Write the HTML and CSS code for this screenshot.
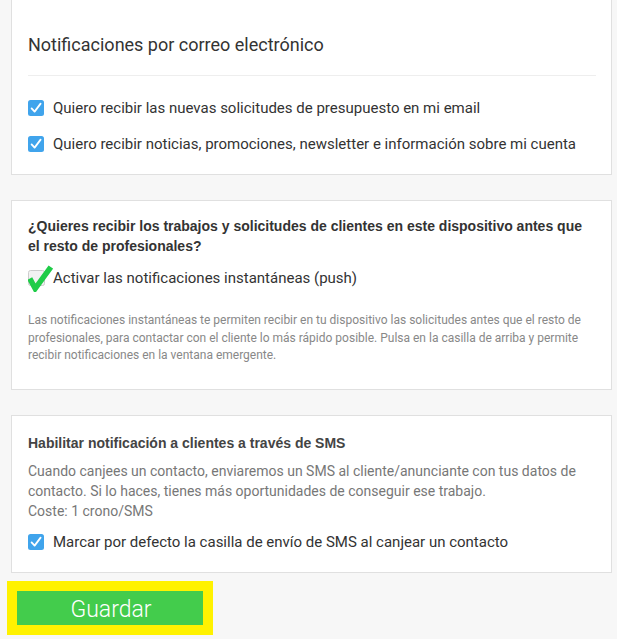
FILE: index.html
```html
<!DOCTYPE html>
<html lang="es">
<head>
    <meta charset="UTF-8">
    <meta name="viewport" content="width=device-width, initial-scale=1.0">
    <title>Notificaciones</title>
    <link rel="stylesheet" href="styles.css">
</head>
<body>
    <div class="page">
        <!-- Correo electrónico -->
        <div class="card card-first">
            <h2 class="card-title">Notificaciones por correo electrónico</h2>
            <hr class="divider">
            <label class="check-row">
                <svg class="check-icon" viewBox="0 0 16 16" width="16" height="16"><rect x="0" y="0" width="16" height="16" rx="2.5" fill="#40a4ec"/><path d="M3.6 8.4 L6.6 11.6 L12.6 3.6" fill="none" stroke="#fff" stroke-width="1.8" stroke-linecap="round" stroke-linejoin="round"/></svg>
                <span>Quiero recibir las nuevas solicitudes de presupuesto en mi email</span>
            </label>
            <label class="check-row">
                <svg class="check-icon" viewBox="0 0 16 16" width="16" height="16"><rect x="0" y="0" width="16" height="16" rx="2.5" fill="#40a4ec"/><path d="M3.6 8.4 L6.6 11.6 L12.6 3.6" fill="none" stroke="#fff" stroke-width="1.8" stroke-linecap="round" stroke-linejoin="round"/></svg>
                <span>Quiero recibir noticias, promociones, newsletter e información sobre mi cuenta</span>
            </label>
        </div>

        <!-- Push -->
        <div class="card card-push">
            <p class="question">¿Quieres recibir los trabajos y solicitudes de clientes en este dispositivo antes que el resto de profesionales?</p>
            <label class="check-row push-row">
                <svg class="push-icon" viewBox="0 0 25 28" width="25" height="28"><rect x="0.5" y="6.5" width="16" height="15" rx="2" fill="#f2f2f2" stroke="#cccccc"/><path d="M1.8 14.5 L7.2 24.5 L22.8 3" fill="none" stroke="#1fcc48" stroke-width="5.5" stroke-linejoin="miter" stroke-linecap="butt"/></svg>
                <span>Activar las notificaciones instantáneas (push)</span>
            </label>
            <p class="note">Las notificaciones instantáneas te permiten recibir en tu dispositivo las solicitudes antes que el resto de profesionales, para contactar con el cliente lo más rápido posible. Pulsa en la casilla de arriba y permite recibir notificaciones en la ventana emergente.</p>
        </div>

        <!-- SMS -->
        <div class="card card-sms">
            <p class="sms-title">Habilitar notificación a clientes a través de SMS</p>
            <p class="sms-text">Cuando canjees un contacto, enviaremos un SMS al cliente/anunciante con tus datos de contacto. Si lo haces, tienes más oportunidades de conseguir ese trabajo.<br>Coste: 1 crono/SMS</p>
            <label class="check-row">
                <svg class="check-icon" viewBox="0 0 16 16" width="16" height="16"><rect x="0" y="0" width="16" height="16" rx="2.5" fill="#40a4ec"/><path d="M3.6 8.4 L6.6 11.6 L12.6 3.6" fill="none" stroke="#fff" stroke-width="1.8" stroke-linecap="round" stroke-linejoin="round"/></svg>
                <span>Marcar por defecto la casilla de envío de SMS al canjear un contacto</span>
            </label>
        </div>

        <div class="save-wrap">
            <button class="save-btn">Guardar</button>
        </div>
    </div>
</body>
</html>
```

FILE: styles.css
```css
body {
    margin: 0;
    padding: 0;
    background-color: #f7f7f7;
    font-family: 'Roboto', 'Liberation Sans', sans-serif;
    color: #333;
}

.page {
    padding: 0 5px 0 11px;
}

.card {
    background-color: #fff;
    border: 1px solid #e0e0e0;
    padding: 0 15px 0 16px;
}

.card-first {
    border-top: none;
    padding-top: 32px;
    padding-bottom: 20px;
}

.card-title {
    margin: 0;
    font-size: 18px;
    font-weight: 400;
    line-height: 26px;
    color: #333;
}

.divider {
    border: none;
    border-top: 1px solid #eee;
    margin: 17px 0 22px 0;
}

.check-row {
    display: flex;
    align-items: center;
    gap: 9px;
    font-size: 15px;
    line-height: 20px;
    color: #333;
    margin-bottom: 16px;
}

.card-first .check-row:last-child {
    margin-bottom: 0;
}

.check-icon {
    flex-shrink: 0;
}

.card-push {
    margin-top: 25px;
    padding-top: 15px;
    padding-bottom: 24px;
}

.question {
    margin: 0;
    font-family: 'Liberation Sans', Arial, sans-serif;
    font-weight: bold;
    font-size: 14px;
    line-height: 20px;
    color: #333;
}

.push-row {
    gap: 0;
    margin-top: 8px;
    margin-bottom: 0;
}

.push-icon {
    flex-shrink: 0;
}

.note {
    margin: 20px 0 0 0;
    font-size: 12px;
    line-height: 17.5px;
    color: #888;
}

.card-sms {
    margin-top: 25px;
    padding-top: 17px;
    padding-bottom: 20px;
}

.sms-title {
    margin: 0;
    font-family: 'Liberation Sans', Arial, sans-serif;
    font-weight: bold;
    font-size: 14px;
    line-height: 20px;
    color: #444;
}

.sms-text {
    margin: 8px 0 11px 0;
    font-size: 14px;
    line-height: 20px;
    color: #777;
}

.card-sms .check-row {
    margin-bottom: 0;
}

.save-wrap {
    padding: 8px 0 0 0;
    margin-left: -4px;
}

.save-btn {
    display: block;
    width: 206px;
    height: 54px;
    box-sizing: border-box;
    border: 10px solid #fff200;
    background-color: #43cc4c;
    color: #fff;
    font-family: 'Roboto', sans-serif;
    font-weight: 300;
    font-size: 23px;
    padding: 3px 0 0 2px;
    cursor: pointer;
}
```
